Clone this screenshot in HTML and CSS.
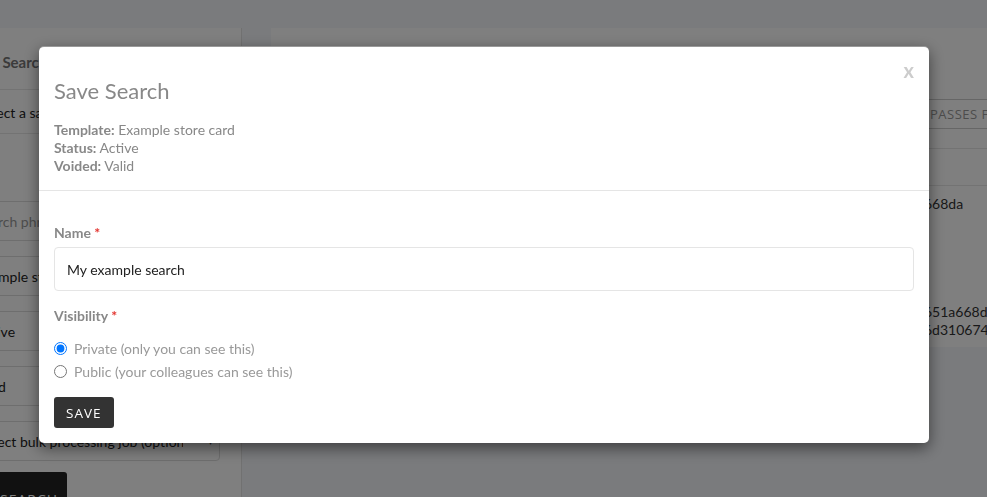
FILE: index.html
```html
<!DOCTYPE html>
<html lang="en">
<head>
    <meta charset="UTF-8">
    <meta name="viewport" content="width=device-width, initial-scale=1.0">
    <title>Save Search</title>
    <link rel="stylesheet" href="styles.css">
</head>
<body>
    <header class="topbar"></header>

    <div class="layout">
        <aside class="sidebar">
            <div class="side-inner">
                <h2 class="side-title">Saved Search</h2>
                <div class="side-select">Select a saved search</div>
                <div class="side-fields">
                    <div class="field placeholder">Search phrase</div>
                    <div class="field">Example store card</div>
                    <div class="field">Active</div>
                    <div class="field">Valid</div>
                    <div class="field select"><span class="select-text">Select bulk processing job (optional)</span><span class="caret">&#9662;</span></div>
                </div>
                <button class="side-btn">SEARCH</button>
            </div>
        </aside>

        <div class="gutter"></div>

        <main class="content">
            <div class="toolbar">
                <button class="ghost-btn">PASSES FOR SEARCH</button>
            </div>
            <div class="table-head"></div>
            <div class="table-row">
                <span class="hash">668da</span>
            </div>
            <div class="table-row">
                <span class="hash">651a668d<br>6d310674</span>
            </div>
        </main>
    </div>

    <!-- Ventana modal para guardar la búsqueda -->
    <div class="backdrop"></div>
    <div class="modal">
        <span class="close">x</span>
        <div class="modal-header">
            <h1 class="modal-title">Save Search</h1>
            <p class="meta"><b>Template:</b> Example store card</p>
            <p class="meta"><b>Status:</b> Active</p>
            <p class="meta"><b>Voided:</b> Valid</p>
        </div>
        <form class="modal-body">
            <label class="label" for="name">Name <span class="req">*</span></label>
            <input class="input" id="name" type="text" value="My example search">

            <div class="label visibility">Visibility <span class="req">*</span></div>
            <label class="radio"><input type="radio" name="visibility" checked> Private (only you can see this)</label>
            <label class="radio"><input type="radio" name="visibility"> Public (your colleagues can see this)</label>

            <button type="button" class="save-btn">SAVE</button>
        </form>
    </div>
</body>
</html>
```

FILE: styles.css
```css
/* Estructura general */
body {
    margin: 0;
    height: 100vh;
    overflow: hidden;
    background-color: #f4f6fa;
    font-family: Lato, 'Open Sans', sans-serif;
    font-size: 14px;
    color: #222;
}

.topbar {
    height: 28px;
    background-color: #f4f6fa;
}

.layout {
    display: flex;
    height: calc(100vh - 28px);
}

/* Barra lateral */
.sidebar {
    width: 241px;
    flex-shrink: 0;
    background-color: #fff;
    border-right: 1px solid #e2e2e2;
    overflow: hidden;
}

.side-inner {
    margin-left: -34px;
    padding-right: 21px;
}

.side-title {
    margin: 0 -21px 0 0;
    padding: 24px 0 17px 0;
    text-indent: -7px;
    font-size: 15px;
    line-height: 20px;
    font-weight: bold;
    color: #777;
    border-bottom: 1px solid #e6e6e6;
    white-space: nowrap;
}

.side-select {
    margin-right: -21px;
    padding: 13px 0 10px 12px;
    line-height: 20px;
    border-bottom: 1px solid #e6e6e6;
    white-space: nowrap;
}

.side-fields {
    display: flex;
    flex-direction: column;
    gap: 15px;
    margin-top: 67px;
}

.field {
    height: 40px;
    box-sizing: border-box;
    border: 1px solid #ddd;
    border-radius: 4px;
    padding: 0 12px 0 9px;
    display: flex;
    align-items: center;
    white-space: nowrap;
    overflow: hidden;
}

.field.placeholder {
    color: #999;
}

.field.select {
    justify-content: space-between;
    padding-left: 12px;
    padding-right: 6px;
}

.select-text {
    width: 204px;
    overflow: hidden;
}

.caret {
    font-size: 10px;
    color: #444;
}

.side-btn {
    margin-top: 11px;
    margin-left: 20px;
    width: 81px;
    height: 40px;
    padding: 14px 0 0 14px;
    border: none;
    border-radius: 3px;
    background-color: #222;
    color: #fff;
    font-family: 'Open Sans', sans-serif;
    font-size: 14px;
    letter-spacing: 1px;
    text-align: left;
    white-space: nowrap;
    overflow: hidden;
}

.gutter {
    width: 29px;
    flex-shrink: 0;
}

/* Contenido principal */
.content {
    flex: 1;
    align-self: flex-start;
    background-color: #fff;
    height: 319px;
    overflow: hidden;
}

.toolbar {
    padding: 71px 0 19px 644px;
    height: 30px;
    border-bottom: 1px solid #e6e6e6;
}

.ghost-btn {
    height: 30px;
    padding: 0 14px;
    border: 1px solid #ccc;
    background: #fff;
    color: #999;
    font-family: 'Open Sans', sans-serif;
    font-size: 13px;
    letter-spacing: 0.5px;
    white-space: nowrap;
}

.table-head {
    height: 36px;
    border-bottom: 1px solid #e6e6e6;
}

.table-row {
    padding: 9px 0 0 653px;
    line-height: 18px;
    height: 99px;
    white-space: nowrap;
    color: #333;
}

/* Fondo oscuro y modal */
.backdrop {
    position: fixed;
    inset: 0;
    background-color: rgba(0, 0, 0, 0.5);
}

.modal {
    position: fixed;
    top: 46px;
    left: 39px;
    width: 890px;
    box-sizing: border-box;
    background-color: #fff;
    border-radius: 5px;
    border-top: 1px solid rgba(0, 0, 0, 0.4);
    box-shadow: 0 5px 15px rgba(0, 0, 0, 0.5);
}

.close {
    position: absolute;
    top: 11px;
    right: 15px;
    font-size: 20px;
    font-weight: bold;
    color: #ccc;
    line-height: 24px;
}

.modal-header {
    padding: 32px 15px 15px 15px;
    border-bottom: 1px solid #e5e5e5;
}

.modal-title {
    margin: 0 0 18px 0;
    font-size: 22px;
    line-height: 24px;
    font-weight: normal;
    color: #888;
}

.meta {
    margin: 0;
    line-height: 18px;
    color: #888;
}

.modal-body {
    display: flex;
    flex-direction: column;
    align-items: flex-start;
    padding: 32px 15px 15px 15px;
}

.label {
    font-weight: bold;
    color: #888;
    line-height: 20px;
    margin-bottom: 4px;
}

.req {
    color: #e3342f;
}

.input {
    width: 100%;
    height: 44px;
    box-sizing: border-box;
    border: 1px solid #e5e5e5;
    border-radius: 4px;
    padding: 0 12px;
    font-family: Lato, sans-serif;
    font-size: 14px;
    color: #222;
}

.visibility {
    margin-top: 15px;
    margin-bottom: 11px;
}

.radio {
    display: flex;
    align-items: center;
    height: 23px;
    color: #999;
}

.radio input {
    margin: 0 7px 0 0;
    width: 13px;
    height: 13px;
}

.save-btn {
    margin-top: 14px;
    height: 31px;
    padding: 0 12px;
    border: none;
    border-radius: 3px;
    background-color: #333;
    color: #fff;
    font-family: 'Open Sans', sans-serif;
    font-size: 13.5px;
    letter-spacing: 1px;
}
```
